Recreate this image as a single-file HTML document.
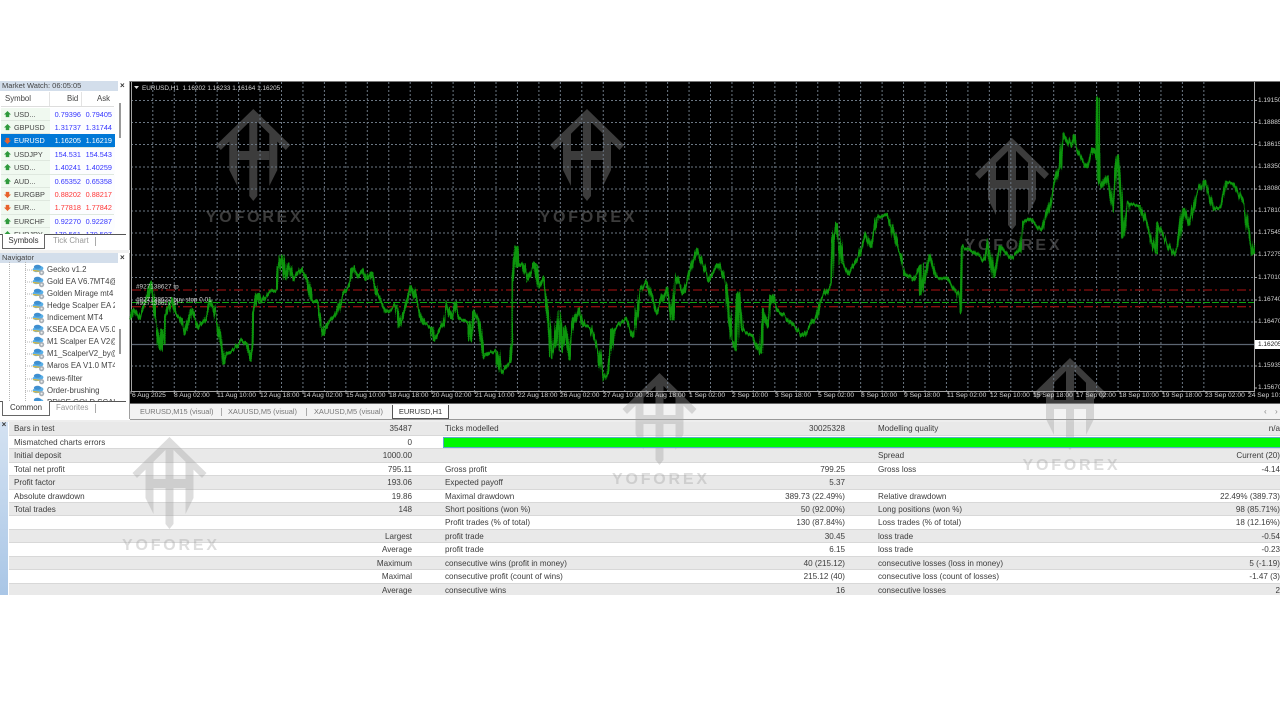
<!DOCTYPE html>
<html lang="en">
<head>
<meta charset="utf-8">
<title>Strategy Tester Report</title>
<style>
html,body{margin:0;padding:0;background:#fff;width:1280px;height:720px;overflow:hidden}
#w{position:absolute;left:0;top:0;width:1280px;height:720px;overflow:hidden;font:8.100px/12px "Liberation Sans",sans-serif;color:#333;filter:blur(.35px)}
.a{position:absolute;white-space:nowrap}
.t{background:#d3deeb;height:10px;left:0;width:118px;line-height:10px;padding-left:2px;color:#444;box-sizing:border-box;font-size:7.500px}
.x{font-weight:bold;font-size:8px;line-height:10px;color:#333;left:120px}
.p{position:absolute;left:0;width:130px;background:#fff;border-right:1px solid #a0a0a0;box-sizing:border-box}
.mw{position:absolute;left:1px;width:113px;height:13.400px;background:#f0f9f0;border-bottom:1px solid #dfe8df;box-sizing:border-box;line-height:13px;font-size:7.300px}
.mw i{position:absolute;font-style:normal;top:0}
.mw .s{left:13px;color:#444}
.mw .b{right:33px;color:#3535ff}
.mw .k{right:2px;color:#3535ff}
.mw .bg{position:absolute;left:49px;top:0;width:65px;height:13px;background:#fcfdff}
.mw.red .b,.mw.red .k{color:#ff3535}
.mw.sel{background:#0078d7}
.mw.sel .bg{background:#0078d7}
.mw.sel .s,.mw.sel .b,.mw.sel .k{color:#fff}
.mw svg{position:absolute;left:3px;top:3px}
.nv{left:47px;width:68px;overflow:hidden;color:#444;font-size:7.800px}
.r{position:absolute;left:9px;width:1271px;height:13.450px;line-height:14px;color:#3c3c3c;box-sizing:border-box;border-bottom:1px solid #d8d8d8}
.r.g{background:#e9e9e9}
.r span{position:absolute;top:0;white-space:nowrap}
.c1{left:5px}.c2{right:868px}.c3{left:436px}.c4{right:435px}.c5{left:869px}.c6{right:0}
.tl{color:#d5d5d5;top:391px;font-size:6.700px;line-height:10px}
.pl{color:#d5d5d5;left:1258px;font-size:6.500px;line-height:10px}
.ct{color:#888}
.tb{font-size:7.400px;color:#777}
</style>
</head>
<body>
<div id="w">

<!-- chart background -->
<div class="a" style="left:130px;top:81px;width:1150px;height:323px;background:#000;border-top:1px solid #777;box-sizing:border-box"></div>
<div class="a" style="left:130px;top:403px;width:1150px;height:1px;background:#666"></div>

<!-- market watch panel -->
<div class="p" style="top:81px;height:169px"></div>
<div class="a t" style="top:81px">Market Watch: 06:05:05</div>
<div class="a x" style="top:81px">×</div>
<div class="a" style="left:1px;top:92px;width:113px;height:14px;background:#fff;border-bottom:1px solid #ddd"></div>
<div class="a" style="left:5px;top:93px;color:#444;font-size:7.800px">Symbol</div>
<div class="a" style="left:67px;top:93px;color:#444;font-size:7.800px">Bid</div>
<div class="a" style="left:97px;top:93px;color:#444;font-size:7.800px">Ask</div>
<div class="a" style="left:49px;top:92px;width:1px;height:14px;background:#e3e3e3"></div>
<div class="a" style="left:81px;top:92px;width:1px;height:14px;background:#e3e3e3"></div>

<div class="mw" style="top:107.500px"><div class="bg"></div><svg width="7" height="7" viewBox="0 0 8 8"><path d="M4 0 8 4H6V7H2V4H0Z" fill="#2f9a3c"/></svg><i class="s">USD...</i><i class="b">0.79396</i><i class="k">0.79405</i></div>
<div class="mw" style="top:121px"><div class="bg"></div><svg width="7" height="7" viewBox="0 0 8 8"><path d="M4 0 8 4H6V7H2V4H0Z" fill="#2f9a3c"/></svg><i class="s">GBPUSD</i><i class="b">1.31737</i><i class="k">1.31744</i></div>
<div class="mw sel" style="top:134.400px"><div class="bg"></div><svg width="7" height="7" viewBox="0 0 8 8"><path d="M2 1H6V4H8L4 8 0 4H2Z" fill="#e8622c"/></svg><i class="s">EURUSD</i><i class="b">1.16205</i><i class="k">1.16219</i></div>
<div class="mw" style="top:147.800px"><div class="bg"></div><svg width="7" height="7" viewBox="0 0 8 8"><path d="M4 0 8 4H6V7H2V4H0Z" fill="#2f9a3c"/></svg><i class="s">USDJPY</i><i class="b">154.531</i><i class="k">154.543</i></div>
<div class="mw" style="top:161.200px"><div class="bg"></div><svg width="7" height="7" viewBox="0 0 8 8"><path d="M4 0 8 4H6V7H2V4H0Z" fill="#2f9a3c"/></svg><i class="s">USD...</i><i class="b">1.40241</i><i class="k">1.40259</i></div>
<div class="mw" style="top:174.600px"><div class="bg"></div><svg width="7" height="7" viewBox="0 0 8 8"><path d="M4 0 8 4H6V7H2V4H0Z" fill="#2f9a3c"/></svg><i class="s">AUD...</i><i class="b">0.65352</i><i class="k">0.65358</i></div>
<div class="mw red" style="top:188px"><div class="bg"></div><svg width="7" height="7" viewBox="0 0 8 8"><path d="M2 1H6V4H8L4 8 0 4H2Z" fill="#e8622c"/></svg><i class="s">EURGBP</i><i class="b">0.88202</i><i class="k">0.88217</i></div>
<div class="mw red" style="top:201.400px"><div class="bg"></div><svg width="7" height="7" viewBox="0 0 8 8"><path d="M2 1H6V4H8L4 8 0 4H2Z" fill="#e8622c"/></svg><i class="s">EUR...</i><i class="b">1.77818</i><i class="k">1.77842</i></div>
<div class="mw" style="top:214.800px"><div class="bg"></div><svg width="7" height="7" viewBox="0 0 8 8"><path d="M4 0 8 4H6V7H2V4H0Z" fill="#2f9a3c"/></svg><i class="s">EURCHF</i><i class="b">0.92270</i><i class="k">0.92287</i></div>
<div class="a" style="left:1px;top:228.200px;width:113px;height:6px;overflow:hidden"><div class="mw" style="top:0;left:0"><div class="bg"></div><svg width="7" height="7" viewBox="0 0 8 8"><path d="M4 0 8 4H6V7H2V4H0Z" fill="#2f9a3c"/></svg><i class="s">EURJPY</i><i class="b">179.561</i><i class="k">179.597</i></div></div>

<div class="a" style="left:119px;top:103px;width:2px;height:35px;background:#9a9a9a"></div>

<!-- market watch tabs -->
<div class="a" style="left:0;top:234px;width:126px;height:1px;background:#555"></div>
<div class="a" style="left:2px;top:234px;width:43px;height:15px;background:#fff;border:1px solid #666;border-top:0;box-sizing:border-box;text-align:center;line-height:13px;color:#333;font-size:7.900px">Symbols</div>
<div class="a ct" style="left:53px;top:235px;color:#999;font-size:7.900px">Tick Chart</div>
<div class="a" style="left:95px;top:237px;width:1px;height:9px;background:#aaa"></div>
<div class="a" style="left:0;top:250px;width:130px;height:3px;background:#f0f0f0"></div>

<!-- navigator -->
<div class="p" style="top:253px;height:166px"></div>
<div class="a t" style="top:253px">Navigator</div>
<div class="a x" style="top:253px">×</div>

<svg class="a" style="left:0;top:262px" width="118" height="140" viewBox="0 262 118 140">
<defs>
<g id="ic">
<ellipse cx="0" cy="0" rx="5.500" ry="3" fill="#58aee6" transform="rotate(-12)"/>
<ellipse cx="-.5" cy="-2.200" rx="3.600" ry="2" fill="#3f8fd0"/>
<path d="M-5 1.500 3 2.500" stroke="#e2b93b" stroke-width="1.200"/>
<circle cx="3.600" cy="3.600" r="2.600" fill="#a8afb6"/>
<circle cx="3.600" cy="3.600" r="1" fill="#eee"/>
</g>
</defs>
<path d="M9.500 262V402M25.500 262V402" stroke="#b5b5b5" stroke-dasharray="1 1"/>
<path d="M25 270H32M25 282H32M25 294H32M25 306H32M25 318H32M25 330H32M25 342H32M25 354H32M25 366H32M25 379H32M25 391H32" stroke="#b5b5b5" stroke-dasharray="1 1"/>
<use href="#ic" x="38" y="269"/><use href="#ic" x="38" y="281"/><use href="#ic" x="38" y="293"/><use href="#ic" x="38" y="305"/><use href="#ic" x="38" y="317"/><use href="#ic" x="38" y="329"/><use href="#ic" x="38" y="341"/><use href="#ic" x="38" y="353"/><use href="#ic" x="38" y="365"/><use href="#ic" x="38" y="378"/><use href="#ic" x="38" y="390"/><use href="#ic" x="38" y="402"/>
</svg>
<div class="a nv" style="top:264px">Gecko v1.2</div>
<div class="a nv" style="top:276px">Gold EA V6.7MT4@</div>
<div class="a nv" style="top:288px">Golden Mirage mt4</div>
<div class="a nv" style="top:300px">Hedge Scalper EA 2</div>
<div class="a nv" style="top:312px">Indicement MT4</div>
<div class="a nv" style="top:324px">KSEA DCA EA V5.0</div>
<div class="a nv" style="top:336px">M1 Scalper EA V2@</div>
<div class="a nv" style="top:348px">M1_ScalperV2_by@</div>
<div class="a nv" style="top:360px">Maros EA V1.0 MT4</div>
<div class="a nv" style="top:373px">news-filter</div>
<div class="a nv" style="top:385px">Order-brushing</div>
<div class="a nv" style="top:397px;height:4px">PRICE GOLD SCAL</div>
<div class="a" style="left:119px;top:329px;width:2px;height:25px;background:#9a9a9a"></div>

<div class="a" style="left:0;top:401px;width:126px;height:1px;background:#555"></div>
<div class="a" style="left:2px;top:401px;width:48px;height:15px;background:#fff;border:1px solid #666;border-top:0;box-sizing:border-box;text-align:center;line-height:13px;color:#333;font-size:7.900px">Common</div>
<div class="a" style="left:56px;top:402px;color:#999;font-size:7.900px">Favorites</div>
<div class="a" style="left:95px;top:404px;width:1px;height:9px;background:#aaa"></div>

<!-- chart tabs -->
<div class="a" style="left:130px;top:404px;width:1150px;height:16px;background:#f3f3f3;border-bottom:1px solid #999;box-sizing:border-box"></div>
<div class="a tb" style="left:140px;top:406px">EURUSD,M15 (visual)</div>
<div class="a" style="left:221px;top:408px;width:1px;height:8px;background:#aaa"></div>
<div class="a tb" style="left:228px;top:406px">XAUUSD,M5 (visual)</div>
<div class="a" style="left:306px;top:408px;width:1px;height:8px;background:#aaa"></div>
<div class="a tb" style="left:314px;top:406px">XAUUSD,M5 (visual)</div>
<div class="a" style="left:392px;top:405px;width:57px;height:14px;background:#fff;border:1px solid #555;border-top:0;box-sizing:border-box;text-align:center;line-height:13px;color:#333;font-size:7.500px">EURUSD,H1</div>
<div class="a" style="left:1264px;top:406px;color:#888">‹</div>
<div class="a" style="left:1275px;top:406px;color:#888">›</div>

<!-- report -->
<div class="a" style="left:0;top:420px;width:1280px;height:2px;background:#eee"></div>
<div class="a" style="left:0;top:422px;width:8px;height:173px;background:linear-gradient(#d4e2f2,#a9c6e6)"></div>
<div class="a" style="left:0;top:420px;width:8px;font-size:8px;font-weight:bold;text-align:center;line-height:10px">×</div>

<div class="r g" style="top:422.300px"><span class="c1">Bars in test</span><span class="c2">35487</span><span class="c3">Ticks modelled</span><span class="c4">30025328</span><span class="c5">Modelling quality</span><span class="c6">n/a</span></div>
<div class="r" style="top:435.750px"><span class="c1">Mismatched charts errors</span><span class="c2">0</span></div>
<div class="r g" style="top:449.200px"><span class="c1">Initial deposit</span><span class="c2">1000.00</span><span class="c5">Spread</span><span class="c6">Current (20)</span></div>
<div class="r" style="top:462.650px"><span class="c1">Total net profit</span><span class="c2">795.11</span><span class="c3">Gross profit</span><span class="c4">799.25</span><span class="c5">Gross loss</span><span class="c6">-4.14</span></div>
<div class="r g" style="top:476.100px"><span class="c1">Profit factor</span><span class="c2">193.06</span><span class="c3">Expected payoff</span><span class="c4">5.37</span></div>
<div class="r" style="top:489.550px"><span class="c1">Absolute drawdown</span><span class="c2">19.86</span><span class="c3">Maximal drawdown</span><span class="c4">389.73 (22.49%)</span><span class="c5">Relative drawdown</span><span class="c6">22.49% (389.73)</span></div>
<div class="r g" style="top:503px"><span class="c1">Total trades</span><span class="c2">148</span><span class="c3">Short positions (won %)</span><span class="c4">50 (92.00%)</span><span class="c5">Long positions (won %)</span><span class="c6">98 (85.71%)</span></div>
<div class="r" style="top:516.450px"><span class="c3">Profit trades (% of total)</span><span class="c4">130 (87.84%)</span><span class="c5">Loss trades (% of total)</span><span class="c6">18 (12.16%)</span></div>
<div class="r g" style="top:529.900px"><span class="c2">Largest</span><span class="c3">profit trade</span><span class="c4">30.45</span><span class="c5">loss trade</span><span class="c6">-0.54</span></div>
<div class="r" style="top:543.350px"><span class="c2">Average</span><span class="c3">profit trade</span><span class="c4">6.15</span><span class="c5">loss trade</span><span class="c6">-0.23</span></div>
<div class="r g" style="top:556.800px"><span class="c2">Maximum</span><span class="c3">consecutive wins (profit in money)</span><span class="c4">40 (215.12)</span><span class="c5">consecutive losses (loss in money)</span><span class="c6">5 (-1.19)</span></div>
<div class="r" style="top:570.250px"><span class="c2">Maximal</span><span class="c3">consecutive profit (count of wins)</span><span class="c4">215.12 (40)</span><span class="c5">consecutive loss (count of losses)</span><span class="c6">-1.47 (3)</span></div>
<div class="r g" style="top:583.700px;height:11.300px;border-bottom:0"><span class="c2">Average</span><span class="c3">consecutive wins</span><span class="c4">16</span><span class="c5">consecutive losses</span><span class="c6">2</span></div>

<!-- watermarks -->
<svg class="a" style="left:0;top:0" width="1280" height="720" viewBox="0 0 1280 720">
<defs>
<g id="lg">
<polygon points="0,0 37,36 32.500,41 0,9 -32.500,41 -37,36"/>
<polygon points="-24,26 -16,18 -16,77 -24,61"/>
<polygon points="24,26 16,18 16,77 24,61"/>
<polygon points="-4,5 4,5 4,87 0,92 -4,87"/>
<rect x="-16" y="42" width="32" height="9"/>
</g>
</defs>
<g fill="#a2a2a2" font-family="Liberation Sans,sans-serif" font-size="16" font-weight="bold" text-anchor="middle">
<g opacity=".37"><use href="#lg" x="253.300" y="109"/><text x="253.300" y="222" textLength="95" lengthAdjust="spacing">YOFOREX</text></g>
<g opacity=".37"><use href="#lg" x="587" y="109"/><text x="587" y="222" textLength="95" lengthAdjust="spacing">YOFOREX</text></g>
<g opacity=".37"><use href="#lg" x="1012" y="138"/><text x="1012" y="250" textLength="95" lengthAdjust="spacing">YOFOREX</text></g>
<g opacity=".37"><use href="#lg" x="659.500" y="373"/><text x="659.500" y="484" textLength="95" lengthAdjust="spacing">YOFOREX</text></g>
<g opacity=".37"><use href="#lg" x="1070" y="358"/><text x="1070" y="470" textLength="95" lengthAdjust="spacing">YOFOREX</text></g>
<g opacity=".37"><use href="#lg" x="169.500" y="437"/><text x="169.500" y="550" textLength="95" lengthAdjust="spacing">YOFOREX</text></g>
</g>
</svg>

<!-- green quality bar -->
<div class="a" style="left:443px;top:437px;width:837px;height:11px;background:#00f800;border:1px solid #5aa9c8;border-right:0;box-sizing:border-box"></div>

<!-- chart -->
<svg class="a" style="left:0;top:0" width="1280" height="420" viewBox="0 0 1280 420">
<defs>
<filter id="jag" filterUnits="userSpaceOnUse" x="125" y="85" width="1135" height="310">
<feTurbulence type="fractalNoise" baseFrequency="0.45 0.002" numOctaves="2" seed="7"/>
<feDisplacementMap in="SourceGraphic" scale="6" xChannelSelector="A" yChannelSelector="R"/>
</filter>
<polyline id="p1" transform="translate(130 230) scale(.3333)" points="0,270 10,240 25,265 40,230 55,200 62,160 70,230 80,300 90,360 95,300 105,340 107,260 125,210 135,250 150,265 165,315 185,240 205,295 225,270 240,210 255,250 270,320 280,400 290,370 310,360 335,330 350,345 362,390 370,340 372,250 385,190 395,215 420,185 440,180 445,120 455,75 465,150 475,100 490,150 515,115 535,150 545,210 560,210 580,315 590,285 620,250 640,190 660,165 670,115 685,140 700,120 710,150 725,125 740,190 770,245 800,225 808,290 825,235 845,170 860,220 880,280 905,295 910,330 940,280 950,215 965,265 975,220 985,265 1015,275 1022,330 1030,245 1045,270 1060,385 1075,370 1100,360 1112,430 1140,395 1147,340 1148,160 1160,50 1165,110 1180,100 1195,155"/>
<polyline id="p2" transform="translate(520 230) scale(.3333)" points="20,155 45,100 55,170 70,140 85,250 95,380 105,345 115,245 125,365 135,290 148,385 160,280 175,235 190,290 210,290 235,360 250,450 265,430 280,300 315,265 340,320 360,180 378,155 410,250 440,175 455,265 465,130 490,190 510,125 530,60 545,100 565,150 595,105 620,170 627,260 635,330 648,360 655,190 665,300 700,320 722,370 730,240 745,290 755,195 770,240 800,265 850,320 890,260 900,215 935,160 940,30 950,-20 965,100 985,130 1015,80 1040,10 1055,50 1075,-40 1100,-50 1115,-10 1135,70"/>
<polyline id="p3" transform="translate(900 80) scale(.3333)" points="0,520 15,580 40,600 65,555 65,640 90,525 110,590 140,595 175,640 183,695 188,500 215,510 250,540 262,480 280,590 300,500 330,535 360,510 370,430 390,415 425,450 445,385 465,310 480,260 490,160 510,200 520,170 530,210 560,260 580,205 590,235 594,55 597,300 605,325 620,285 640,390 650,260 655,230 665,350 670,470 685,370 720,380 745,450 765,520 770,430 820,525 835,500 850,385 865,435 885,350 912,305 940,390 960,380 980,305 1000,310 1030,370 1060,525"/>
</defs>
<path d="M131 100.500H1254M131 122.500H1254M131 144.500H1254M131 167H1254M131 189H1254M131 211H1254M131 233H1254M131 255H1254M131 277.500H1254M131 300H1254M131 322H1254M131 366H1254" stroke="#6c7783" stroke-width="1" stroke-dasharray="2 2" fill="none"/>
<path d="M152.800 82V391m21.450-309v309m21.450-309v309m21.450-309v309m21.450-309v309m21.450-309v309m21.450-309v309m21.450-309v309m21.450-309v309m21.450-309v309m21.450-309v309m21.450-309v309m21.450-309v309m21.450-309v309m21.450-309v309m21.450-309v309m21.450-309v309m21.450-309v309m21.450-309v309m21.450-309v309m21.450-309v309m21.450-309v309m21.450-309v309m21.450-309v309m21.450-309v309m21.450-309v309m21.450-309v309m21.450-309v309m21.450-309v309m21.450-309v309m21.450-309v309m21.450-309v309m21.450-309v309m21.450-309v309m21.450-309v309m21.450-309v309m21.450-309v309m21.450-309v309m21.450-309v309m21.450-309v309m21.450-309v309m21.450-309v309m21.450-309v309m21.450-309v309m21.450-309v309m21.450-309v309m21.450-309v309m21.450-309v309m21.450-309v309m21.450-309v309" stroke="#6c7783" stroke-width="1" stroke-dasharray="2 2" fill="none"/>
<path d="M131.500 82V391.500H1254.500V82" stroke="#a5a5a5" fill="none"/>
<path d="M131 391v3M174.300 391v3M217.200 391v3M260.100 391v3M303 391v3M346 391v3M389 391v3M432 391v3M475 391v3M518 391v3M561 391v3M604 391v3M647 391v3M690 391v3M733 391v3M776 391v3M819 391v3M862 391v3M905 391v3M948 391v3M991 391v3M1034 391v3M1077 391v3M1120 391v3M1163 391v3M1206 391v3M1249 391v3" stroke="#aaa"/>
<path d="M1254 100.500h3M1254 122.500h3M1254 144.500h3M1254 167h3M1254 189h3M1254 211h3M1254 233h3M1254 255h3M1254 277.500h3M1254 300h3M1254 322h3M1254 366h3M1254 388h3" stroke="#aaa"/>

<path d="M132 290H1254M132 306.700H1254" stroke="#8b0f0f" stroke-width="1.300" stroke-dasharray="9 3 2 3" fill="none"/>
<path d="M132 302.500H1254" stroke="#0fa30f" stroke-width="1" stroke-dasharray="7 2" fill="none"/>
<path d="M132 344.500H1254" stroke="#5c6672" stroke-width="1.200" fill="none"/>

<g filter="url(#jag)" fill="none" stroke="#0a960c" stroke-linejoin="round">
<g stroke-width="7.500"><use href="#p1"/><use href="#p2"/><use href="#p3"/></g>
<g stroke-width="10" stroke-dasharray="2 5"><use href="#p1"/><use href="#p2"/><use href="#p3"/></g>
</g>

<path d="M134 86h5l-2.500 3z" fill="#ddd"/>
<g font-family="Liberation Sans,sans-serif" font-size="6.400" fill="#d5d5d5">
<text x="142" y="90">EURUSD,H1 &#160;1.16202 1.16233 1.16164 1.16205</text>
<text x="136" y="288.500">#927138627 tp</text>
<text x="136" y="301.500">#927138627 buy stop 0.01</text>
<text x="136" y="305">#927138627 sl</text>
</g>
</svg>

<!-- price axis -->
<div class="a pl" style="top:95.500px">1.19150</div>
<div class="a pl" style="top:117.500px">1.18885</div>
<div class="a pl" style="top:139.500px">1.18615</div>
<div class="a pl" style="top:162px">1.18350</div>
<div class="a pl" style="top:184px">1.18080</div>
<div class="a pl" style="top:206px">1.17810</div>
<div class="a pl" style="top:228px">1.17545</div>
<div class="a pl" style="top:250px">1.17275</div>
<div class="a pl" style="top:272.500px">1.17010</div>
<div class="a pl" style="top:295px">1.16740</div>
<div class="a pl" style="top:317px">1.16470</div>
<div class="a" style="left:1255px;top:340px;width:25px;height:9px;background:#fff"></div>
<div class="a pl" style="top:339.500px;color:#222">1.16205</div>
<div class="a pl" style="top:361px">1.15935</div>
<div class="a pl" style="top:383px">1.15670</div>

<!-- time axis -->
<div class="a tl" style="left:132px">6 Aug 2025</div>
<div class="a tl" style="left:174px">8 Aug 02:00</div>
<div class="a tl" style="left:217px">11 Aug 10:00</div>
<div class="a tl" style="left:260px">12 Aug 18:00</div>
<div class="a tl" style="left:303px">14 Aug 02:00</div>
<div class="a tl" style="left:346px">15 Aug 10:00</div>
<div class="a tl" style="left:389px">18 Aug 18:00</div>
<div class="a tl" style="left:432px">20 Aug 02:00</div>
<div class="a tl" style="left:475px">21 Aug 10:00</div>
<div class="a tl" style="left:518px">22 Aug 18:00</div>
<div class="a tl" style="left:560px">26 Aug 02:00</div>
<div class="a tl" style="left:603px">27 Aug 10:00</div>
<div class="a tl" style="left:646px">28 Aug 18:00</div>
<div class="a tl" style="left:689px">1 Sep 02:00</div>
<div class="a tl" style="left:732px">2 Sep 10:00</div>
<div class="a tl" style="left:775px">3 Sep 18:00</div>
<div class="a tl" style="left:818px">5 Sep 02:00</div>
<div class="a tl" style="left:861px">8 Sep 10:00</div>
<div class="a tl" style="left:904px">9 Sep 18:00</div>
<div class="a tl" style="left:947px">11 Sep 02:00</div>
<div class="a tl" style="left:990px">12 Sep 10:00</div>
<div class="a tl" style="left:1033px">15 Sep 18:00</div>
<div class="a tl" style="left:1076px">17 Sep 02:00</div>
<div class="a tl" style="left:1119px">18 Sep 10:00</div>
<div class="a tl" style="left:1162px">19 Sep 18:00</div>
<div class="a tl" style="left:1205px">23 Sep 02:00</div>
<div class="a tl" style="left:1248px">24 Sep 10:00</div>

<!-- white page beyond the screenshot -->
<div class="a" style="left:0;top:595px;width:1280px;height:125px;background:#fff"></div>
<div class="a" style="left:0;top:0;width:1280px;height:81px;background:#fff"></div>
</div>
</body>
</html>
